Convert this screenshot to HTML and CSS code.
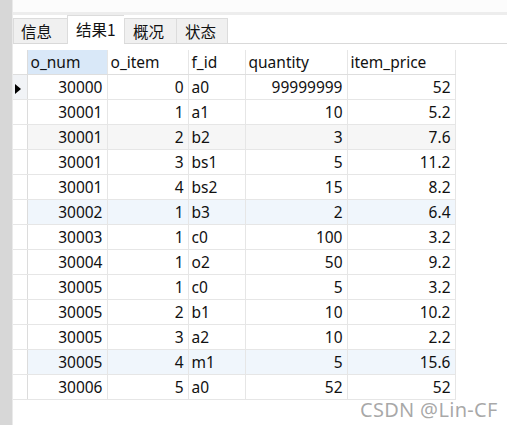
FILE: index.html
```html
<!DOCTYPE html>
<html>
<head>
<meta charset="utf-8">
<link rel="stylesheet" href="styles.css">
</head>
<body>
<div class="app">
  <div class="side"></div>
  <div class="main">
    <div class="topband"></div>
    <div class="tabs">
      <div class="tab">信息</div>
      <div class="tab active">结果1</div>
      <div class="tab">概况</div>
      <div class="tab">状态</div>
    </div>
    <table class="grid">
      <colgroup>
        <col class="c0"><col class="c1"><col class="c2"><col class="c3"><col class="c4"><col class="c5">
      </colgroup>
      <thead>
        <tr><th class="ind"></th><th class="sel">o_num</th><th>o_item</th><th>f_id</th><th>quantity</th><th>item_price</th></tr>
      </thead>
      <tbody>
        <tr><td class="ind cur"><span class="tri"></span></td><td class="n">30000</td><td class="n">0</td><td>a0</td><td class="n">99999999</td><td class="n">52</td></tr>
        <tr><td class="ind"></td><td class="n">30001</td><td class="n">1</td><td>a1</td><td class="n">10</td><td class="n">5.2</td></tr>
        <tr class="gray"><td class="ind"></td><td class="n">30001</td><td class="n">2</td><td>b2</td><td class="n">3</td><td class="n">7.6</td></tr>
        <tr><td class="ind"></td><td class="n">30001</td><td class="n">3</td><td>bs1</td><td class="n">5</td><td class="n">11.2</td></tr>
        <tr><td class="ind"></td><td class="n">30001</td><td class="n">4</td><td>bs2</td><td class="n">15</td><td class="n">8.2</td></tr>
        <tr class="blue"><td class="ind"></td><td class="n">30002</td><td class="n">1</td><td>b3</td><td class="n">2</td><td class="n">6.4</td></tr>
        <tr><td class="ind"></td><td class="n">30003</td><td class="n">1</td><td>c0</td><td class="n">100</td><td class="n">3.2</td></tr>
        <tr><td class="ind"></td><td class="n">30004</td><td class="n">1</td><td>o2</td><td class="n">50</td><td class="n">9.2</td></tr>
        <tr><td class="ind"></td><td class="n">30005</td><td class="n">1</td><td>c0</td><td class="n">5</td><td class="n">3.2</td></tr>
        <tr><td class="ind"></td><td class="n">30005</td><td class="n">2</td><td>b1</td><td class="n">10</td><td class="n">10.2</td></tr>
        <tr><td class="ind"></td><td class="n">30005</td><td class="n">3</td><td>a2</td><td class="n">10</td><td class="n">2.2</td></tr>
        <tr class="blue"><td class="ind"></td><td class="n">30005</td><td class="n">4</td><td>m1</td><td class="n">5</td><td class="n">15.6</td></tr>
        <tr><td class="ind"></td><td class="n">30006</td><td class="n">5</td><td>a0</td><td class="n">52</td><td class="n">52</td></tr>
      </tbody>
    </table>
  </div>
</div>
<div class="watermark">CSDN @Lin-CF</div>
</body>
</html>
```
FILE: styles.css
```css
html, body {
  margin: 0;
  padding: 0;
  background: #ffffff;
}
body {
  width: 507px;
  height: 425px;
  overflow: hidden;
  position: relative;
  font-family: "Noto Sans", "Noto Sans CJK SC", sans-serif;
  color: #111;
}
.app {
  display: flex;
  height: 425px;
}
.side {
  width: 12px;
  flex: none;
  background: #d7d7d7;
  border-right: 1px solid #eaeaea;
}
.main {
  flex: 1;
  display: flex;
  flex-direction: column;
}
.topband {
  height: 12px;
  border-bottom: 3px solid #ededed;
  background: #fcfcfc;
}
.tabs {
  display: flex;
  align-items: flex-end;
  height: 28px;
  border-bottom: 1px solid #d9d9d9;
  margin-bottom: 6px;
}
.tab {
  height: 25px;
  box-sizing: border-box;
  padding: 0 8px;
  font-family: "Noto Sans CJK SC", sans-serif;
  font-size: 15.5px;
  line-height: 24px;
  background: #f0f0f0;
  border: 1px solid #dcdcdc;
  border-bottom: none;
  border-right: none;
  color: #111;
}
.tab:nth-child(1) { width: 54px; padding-left: 7px; }
.tab:nth-child(2) { width: 57px; }
.tab:nth-child(3) { width: 52px; }
.tab:nth-child(4) { width: 52px; border-right: 1px solid #dcdcdc; }
.tab.active {
  height: 29px;
  background: #ffffff;
  line-height: 26px;
  margin-bottom: -1px;
  padding-bottom: 2px;
}
.grid {
  border-collapse: collapse;
  table-layout: fixed;
  width: 442px;
  font-size: 15.5px;
}
.c0 { width: 14px; }
.c1 { width: 80px; }
.c2 { width: 81px; }
.c3 { width: 57px; }
.c4 { width: 102px; }
.c5 { width: 108px; }
.grid th, .grid td {
  height: 24px;
  padding: 0 4px 0 3px;
  border: 1px solid #e6e6e6;
  border-top: none;
  white-space: nowrap;
  overflow: hidden;
  line-height: 24px;
  box-sizing: border-box;
}
.grid th {
  font-weight: normal;
  text-align: left;
  border-bottom: 1px solid #dedede;
  background: #ffffff;
}
.grid th.sel {
  background: #d9e8f8;
}
.grid td.n {
  text-align: right;
  padding-right: 4px;
}
.grid .ind {
  padding: 0;
  border-left: none;
  border-right: 1px solid #dcdcdc;
}
.grid td.ind.cur {
  background: #f1f3f6;
  text-align: center;
}
.tri {
  display: inline-block;
  width: 0;
  height: 0;
  border-top: 5px solid transparent;
  border-bottom: 5px solid transparent;
  border-left: 6px solid #000;
  vertical-align: middle;
  margin-left: -4px;
}
tr.gray td { background: #f6f6f6; }
tr.blue td { background: #f0f6fc; }
tr.gray td.ind, tr.blue td.ind { background: #ffffff; }
.watermark {
  position: absolute;
  left: 360px;
  top: 400px;
  font-family: "Noto Sans", sans-serif;
  font-size: 20px;
  line-height: 20px;
  color: rgba(140, 140, 140, 0.75);
  letter-spacing: 0.3px;
}
```
